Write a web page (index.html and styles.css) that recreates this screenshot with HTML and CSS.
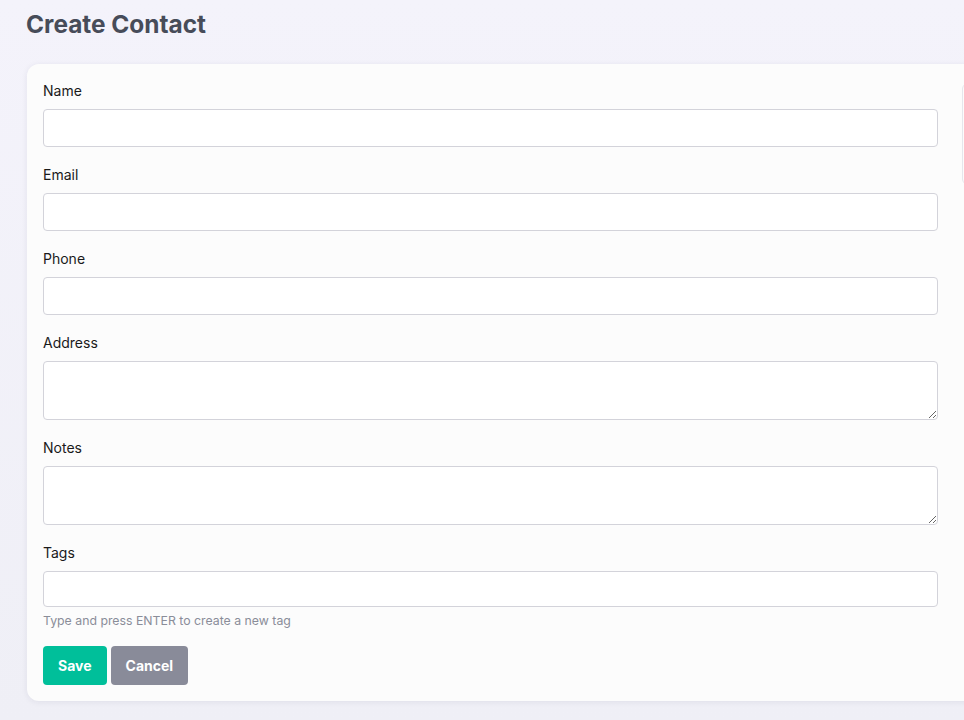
FILE: index.html
```html
<!DOCTYPE html>
<html lang="en">
<head>
    <meta charset="UTF-8">
    <meta name="viewport" content="width=device-width, initial-scale=1.0">
    <title>Create Contact</title>
    <link rel="stylesheet" href="styles.css">
</head>
<body>
    <div class="page">
        <h1>Create Contact</h1>

        <div class="card">
            <form class="contact-form">
                <div class="form-group">
                    <label for="name">Name</label>
                    <input type="text" id="name">
                </div>
                <div class="form-group">
                    <label for="email">Email</label>
                    <input type="text" id="email">
                </div>
                <div class="form-group">
                    <label for="phone">Phone</label>
                    <input type="text" id="phone">
                </div>
                <div class="form-group">
                    <label for="address">Address</label>
                    <textarea id="address"></textarea>
                </div>
                <div class="form-group">
                    <label for="notes">Notes</label>
                    <textarea id="notes"></textarea>
                </div>
                <div class="form-group tags">
                    <label for="tags">Tags</label>
                    <input type="text" id="tags" class="tag-input">
                    <p class="help">Type and press ENTER to create a new tag</p>
                </div>
                <div class="actions">
                    <button type="button" class="btn-save">Save</button>
                    <button type="button" class="btn-cancel">Cancel</button>
                </div>
            </form>
            <div class="side-panel"></div>
        </div>
    </div>
</body>
</html>
```

FILE: styles.css
```css
html, body { margin: 0; padding: 0; }
body { font-family: Inter, "Noto Sans", sans-serif; background: linear-gradient(180deg, #f4f3fb 0%, #efeff6 100%); color: #222; overflow: hidden; height: 720px; }
.page { padding: 8px 0 0 27px; }
h1 { font-size: 24.4px; line-height: 33px; font-weight: 700; color: #474c59; margin: 0 0 23px -1px; }
.card { display: flex; gap: 24px; width: 1000px; background: #fcfcfc; border-radius: 12px; padding: 17px 16px 16px; box-shadow: 0 1px 6px rgba(40, 40, 80, 0.08); }
.contact-form { width: 895px; flex-shrink: 0; }
.form-group { margin-bottom: 18px; }
.form-group.tags { margin-bottom: 17px; }
label { display: block; font-size: 14px; line-height: 20px; font-weight: 400; color: #1a1a1a; margin-bottom: 8px; }
input[type="text"], textarea { display: block; box-sizing: border-box; width: 100%; height: 38px; border: 1px solid #d3d3da; border-radius: 4px; background: #fff; font-family: inherit; font-size: 14px; padding: 8px 10px; }
textarea { height: 59px; resize: vertical; }
input.tag-input { height: 36px; }
.help { margin: 5px 0 0; font-size: 12.3px; line-height: 17px; color: #8a8d99; }
.actions { display: flex; gap: 4px; }
button { border: none; border-radius: 4px; color: #fff; font-family: inherit; font-size: 14px; font-weight: 700; line-height: 19px; padding: 10px 15px; cursor: pointer; }
.btn-save { background: #00bf9a; }
.btn-cancel { background: #898b99; }
.side-panel { margin-top: 2px; width: 200px; height: 100px; border: 1px solid #e6e6ec; border-radius: 6px; background: #fcfcfc; }
```
